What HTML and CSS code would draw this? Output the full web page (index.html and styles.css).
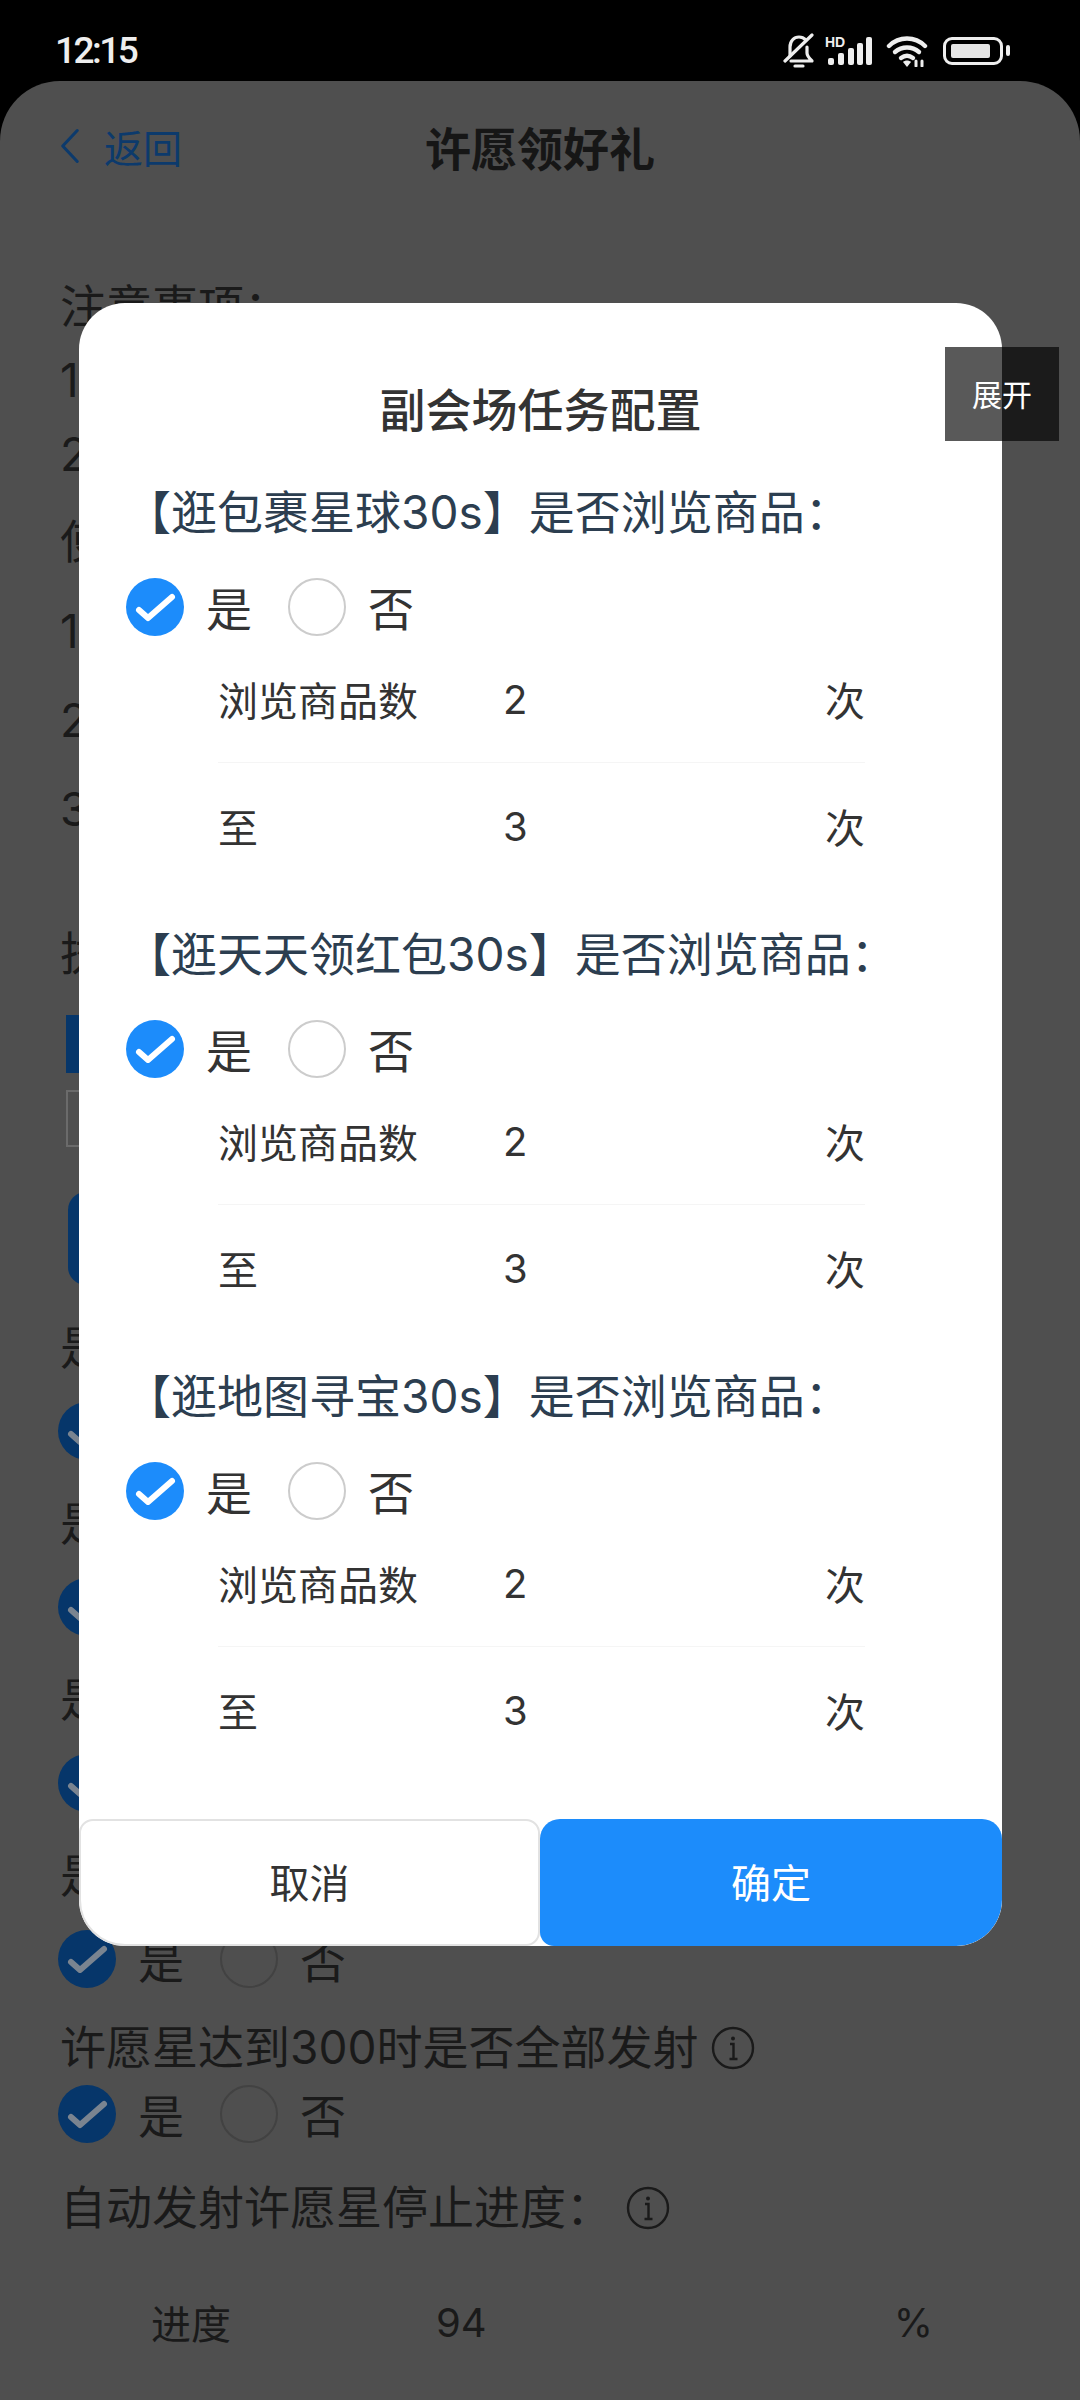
FILE: index.html
```html
<!DOCTYPE html>
<html lang="zh-CN">
<head>
  <meta charset="UTF-8">
  <meta name="viewport" content="width=device-width, initial-scale=1.0">
  <title>许愿领好礼</title>
  <link rel="stylesheet" href="styles.css">
</head>
<body>

  <svg class="sprite" aria-hidden="true">
    <symbol id="tick" viewBox="0 0 58 58">
      <path d="M13 32l9 8L46 19" fill="none" stroke="currentColor" stroke-width="6" stroke-linecap="round" stroke-linejoin="round"/>
    </symbol>
    <symbol id="info" viewBox="0 0 44 44">
      <circle cx="22" cy="22" r="20" fill="none" stroke="currentColor" stroke-width="2.4"/>
      <circle cx="22" cy="12.5" r="2" fill="currentColor"/>
      <path d="M19 18h3.5v15M18.5 33h8" fill="none" stroke="currentColor" stroke-width="2.4"/>
    </symbol>
  </svg>

  <header class="status">
    <span class="time">12:15</span>
    <div class="status-icons">
      <svg class="ic-bell" viewBox="0 0 32 36" fill="none" stroke="#eee" stroke-width="3.2" stroke-linecap="round" stroke-linejoin="round">
        <path d="M7 23V14C7 8 11 4 16 4c3 0 5 1 7 3"/>
        <path d="M24 14v6c0 3 2 5 5 8H8"/>
        <path d="M12 33h8"/>
        <path d="M2 28L29 2"/>
      </svg>
      <div class="signal">
        <span class="hd">HD</span>
        <svg viewBox="0 0 46 28" fill="#eee">
          <rect x="1" y="21" width="6" height="7" rx="2"/>
          <rect x="11" y="16" width="6" height="12" rx="2"/>
          <rect x="21" y="11" width="6" height="17" rx="2"/>
          <rect x="30" y="6" width="6" height="22" rx="2"/>
          <rect x="39" y="0" width="6" height="28" rx="2"/>
        </svg>
      </div>
      <svg class="ic-wifi" viewBox="0 0 42 32" fill="none" stroke="#eee" stroke-width="4.4" stroke-linecap="round">
        <path d="M3 11C13 1 29 1 39 11"/>
        <path d="M9 17c7-6 17-6 24 0"/>
        <path d="M15 23c4-3 8-3 12 0"/>
        <path d="M21 32l-4-5c2-2 6-2 8 0z" fill="#eee" stroke="none"/>
        <path d="M30 31v-5M36 31v-5" stroke-width="3"/>
      </svg>
      <div class="battery"><i></i></div>
    </div>
  </header>

  <div class="page">
    <div class="topbar">
      <a class="back">
        <svg viewBox="0 0 22 38" fill="none" stroke="currentColor" stroke-width="3.4" stroke-linecap="round" stroke-linejoin="round"><path d="M19 2L3 19l16 17"/></svg>
        返回
      </a>
      <h1>许愿领好礼</h1>
    </div>

    <div class="notes notes-a">
      <p>注意事项：</p>
      <p>1</p>
      <p>2</p>
    </div>
    <div class="notes notes-b">
      <p>使</p>
      <p>1</p>
      <p>2</p>
      <p>3</p>
    </div>
    <p class="lead">执</p>

    <div class="block-tab"></div>
    <div class="block-input"></div>
    <div class="block-btn"></div>

    <div class="q">
      <p>是</p>
      <div class="radios">
        <span class="dot on"><svg><use href="#tick"/></svg></span>
      </div>
    </div>
    <div class="q">
      <p>是</p>
      <div class="radios">
        <span class="dot on"><svg><use href="#tick"/></svg></span>
      </div>
    </div>
    <div class="q">
      <p>是</p>
      <div class="radios">
        <span class="dot on"><svg><use href="#tick"/></svg></span>
      </div>
    </div>
    <div class="q">
      <p>是</p>
      <div class="radios">
        <span class="dot on"><svg><use href="#tick"/></svg></span><span class="word">是</span>
        <span class="dot"></span><span class="word">否</span>
      </div>
    </div>

    <p class="q-title q-fire">许愿星达到300时是否全部发射 <svg class="info"><use href="#info"/></svg></p>
    <div class="radios radios-fire">
      <span class="dot on"><svg><use href="#tick"/></svg></span><span class="word">是</span>
      <span class="dot"></span><span class="word">否</span>
    </div>
    <p class="q-title q-stop">自动发射许愿星停止进度：<svg class="info"><use href="#info"/></svg></p>
    <div class="progress">
      <span>进度</span>
      <span>94</span>
      <span>%</span>
    </div>

    <section class="modal">
      <h2>副会场任务配置</h2>

      <div class="task">
        <h3>【逛包裹星球30s】是否浏览商品：</h3>
        <div class="radios">
          <span class="dot on"><svg><use href="#tick"/></svg></span><span class="word">是</span>
          <span class="dot"></span><span class="word">否</span>
        </div>
        <div class="field"><span>浏览商品数</span><span>2</span><span>次</span></div>
        <div class="field"><span>至</span><span>3</span><span>次</span></div>
      </div>

      <div class="task">
        <h3>【逛天天领红包30s】是否浏览商品：</h3>
        <div class="radios">
          <span class="dot on"><svg><use href="#tick"/></svg></span><span class="word">是</span>
          <span class="dot"></span><span class="word">否</span>
        </div>
        <div class="field"><span>浏览商品数</span><span>2</span><span>次</span></div>
        <div class="field"><span>至</span><span>3</span><span>次</span></div>
      </div>

      <div class="task">
        <h3>【逛地图寻宝30s】是否浏览商品：</h3>
        <div class="radios">
          <span class="dot on"><svg><use href="#tick"/></svg></span><span class="word">是</span>
          <span class="dot"></span><span class="word">否</span>
        </div>
        <div class="field"><span>浏览商品数</span><span>2</span><span>次</span></div>
        <div class="field"><span>至</span><span>3</span><span>次</span></div>
      </div>

      <div class="actions">
        <button class="cancel">取消</button>
        <button class="ok">确定</button>
      </div>
    </section>

    <div class="expand">展开</div>
  </div>

</body>
</html>
```

FILE: styles.css
```css
* {
  box-sizing: border-box;
}
body {
  margin: 0;
  width: 1080px;
  height: 2400px;
  overflow: hidden;
  display: flex;
  flex-direction: column;
  background: #000;
  font-family: Inter, "Noto Sans CJK SC", sans-serif;
  color: #1a1a1a;
}
p, h1, h2, h3 {
  margin: 0;
  font-weight: 400;
}
.sprite {
  display: none;
}

/* status bar */
.status {
  height: 81px;
  flex: none;
  display: flex;
  align-items: center;
  justify-content: space-between;
  padding: 20px 72px 0 55px;
  color: #eee;
}
.time {
  font-family: Roboto, sans-serif;
  font-size: 37px;
  font-weight: 500;
  letter-spacing: -2.5px;
}
.status-icons {
  display: flex;
  align-items: center;
}
.ic-bell {
  width: 32px;
  height: 36px;
  margin-right: 12px;
}
.signal {
  position: relative;
  width: 46px;
  height: 28px;
  margin-right: 13px;
  svg {
    display: block;
    width: 46px;
    height: 28px;
  }
  .hd {
    position: absolute;
    left: -2px;
    top: 0;
    font-family: "Liberation Sans", sans-serif;
    font-size: 14px;
    font-weight: 700;
    line-height: 11px;
  }
}
.ic-wifi {
  width: 42px;
  height: 32px;
  margin-right: 15px;
}
.battery {
  position: relative;
  width: 60px;
  height: 28px;
  padding: 4px 5px;
  border: 3px solid #eee;
  border-radius: 9px;
  margin-right: 5px;
  i {
    display: block;
    width: 39px;
    height: 100%;
    background: #e6e6e6;
    border-radius: 2px;
  }
  &::after {
    content: "";
    position: absolute;
    right: -10px;
    top: 5px;
    width: 4px;
    height: 11px;
    background: #eee;
    border-radius: 2px;
  }
}

/* dimmed page behind the dialog */
.page {
  position: relative;
  flex: 1;
  background: #4f4f4f;
  border-radius: 60px 60px 0 0;
  overflow: hidden;
  padding: 0 60px;
  font-size: 46px;
}
.topbar {
  position: relative;
  height: 132px;
  display: flex;
  align-items: center;
  justify-content: center;
  padding-bottom: 3px;
  h1 {
    font-size: 46px;
    font-weight: 700;
    color: #161616;
  }
}
.back {
  position: absolute;
  left: 0;
  top: 0;
  height: 130px;
  display: flex;
  align-items: center;
  gap: 24px;
  font-size: 39px;
  color: #0c3a6c;
  svg {
    width: 20px;
    height: 36px;
  }
}
.notes-a {
  margin-top: 56px;
  line-height: 74px;
}
.notes-b {
  margin-top: 6px;
  line-height: 89px;
  p:first-child {
    line-height: 88px;
    margin-bottom: 2px;
  }
}
.lead {
  margin-top: 69px;
  line-height: 60px;
}
.block-tab {
  width: 60px;
  height: 58px;
  margin: 32px 0 0 6px;
  background: #06366a;
}
.block-input {
  width: 60px;
  height: 57px;
  margin: 17px 0 0 6px;
  border: 2px solid #6b6b6b;
}
.block-btn {
  width: 60px;
  height: 93px;
  margin: 45px 0 0 8px;
  background: #06366a;
  border-radius: 18px;
}

.q {
  height: 176px;
  p {
    line-height: 60px;
  }
  .radios {
    margin-top: 25px;
  }
}
.block-btn + .q {
  margin-top: 32px;
}
.radios {
  display: flex;
  align-items: center;
  height: 58px;
  color: #1a1a1a;
}
.page > .radios,
.q .radios {
  margin-left: -2px;
}
.dot {
  flex: none;
  width: 58px;
  height: 58px;
  border-radius: 50%;
  border: 2px solid #424242;
  &.on {
    border: 0;
    background: #06366a;
    color: #7a8490;
  }
  svg {
    display: block;
    width: 58px;
    height: 58px;
  }
}
.word {
  width: 46px;
  margin: 0 36px 3px 22px;
}
.q-title {
  line-height: 60px;
  white-space: nowrap;
}
.q-fire {
  margin-top: -4px;
}
.radios-fire {
  margin-top: 8px;
}
.q-stop {
  margin-top: 34px;
  .info {
    margin-left: 14px;
  }
}
.info {
  width: 44px;
  height: 44px;
  color: #1a1a1a;
  vertical-align: -6px;
}
.progress {
  display: grid;
  grid-template-columns: 285px 1fr auto;
  align-items: center;
  height: 60px;
  margin: 55px 87px 0 91px;
  font-size: 40px;
}

/* dialog */
.modal {
  position: absolute;
  left: 79px;
  top: 222px;
  width: 923px;
  background: #fff;
  border-radius: 46px;
  padding-top: 75px;
  overflow: hidden;
  color: #333;
  h2 {
    font-size: 46px;
    font-weight: 500;
    line-height: 64px;
    text-align: center;
    margin-bottom: 40px;
  }
}
.task {
  padding-bottom: 35px;
  h3 {
    font-size: 46px;
    line-height: 60px;
    color: #2c3e50;
    padding-left: 46px;
    white-space: nowrap;
  }
  .radios {
    margin: 36px 0 0 47px;
    color: #333;
  }
  .dot {
    border-color: #ccc;
    &.on {
      background: #1c8cfb;
      color: #fff;
    }
  }
}
.field {
  display: grid;
  grid-template-columns: 285px 1fr auto;
  align-items: center;
  height: 126px;
  margin: 0 137px 0 139px;
  font-size: 40px;
  &:nth-child(3) {
    border-bottom: 1px solid #f5f5f5;
    height: 127px;
  }
}
.actions {
  display: grid;
  grid-template-columns: 461px 462px;
  margin-top: 11px;
  height: 127px;
  button {
    border: 0;
    padding: 0 0 4px;
    font-family: inherit;
    font-size: 40px;
  }
}
.cancel {
  background: #fff;
  color: #333;
  border: 2px solid #e2e2e2 !important;
  border-radius: 14px 14px 14px 46px;
}
.ok {
  background: #1c8cfb;
  color: #fff;
  border-radius: 20px 20px 46px 14px;
}
.expand {
  position: absolute;
  left: 945px;
  top: 266px;
  width: 114px;
  height: 94px;
  display: flex;
  align-items: center;
  justify-content: center;
  background: rgba(0, 0, 0, .65);
  color: #fff;
  font-size: 30px;
  padding-bottom: 2px;
}
```
